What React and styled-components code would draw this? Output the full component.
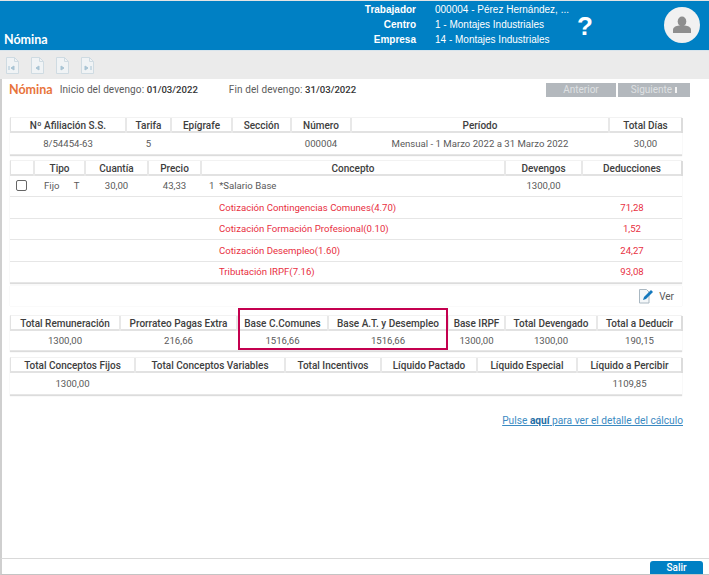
import React from 'react'
import styled, { createGlobalStyle } from 'styled-components'

const FONT = 'Roboto, "Noto Sans", sans-serif'
const BLUE = '#0080c4'

const GlobalStyle = createGlobalStyle`
  html, body { margin: 0; padding: 0; background: #fff; }
  body { font-family: ${FONT}; }
`

const Page = styled.div`
  width: 709px;
  height: 575px;
  box-sizing: border-box;
  border-top: 1px solid #e4e4e4;
  display: flex;
  flex-direction: column;
  overflow: hidden;
`

const Header = styled.header`
  height: 49px;
  flex: none;
  background: ${BLUE};
  display: flex;
  align-items: stretch;
  color: #fff;
`

const AppTitle = styled.div`
  font-family: Lato, sans-serif;
  font-size: 12.5px;
  font-weight: 700;
  align-self: flex-end;
  margin-left: 4px;
  line-height: 20px;
  width: 341px;
`

const InfoGrid = styled.div`
  display: grid;
  grid-template-columns: 71px 130px;
  column-gap: 19px;
  grid-auto-rows: 15px;
  align-content: start;
  padding-top: 1px;
  font-family: "Liberation Sans", Arial, sans-serif;
  font-size: 10px;
  line-height: 15px;
`

const InfoLabel = styled.div`
  font-weight: 700;
  text-align: right;
`

const InfoValue = styled.div`
  white-space: nowrap;
`

const Help = styled.div`
  font-family: "Liberation Sans", Arial, sans-serif;
  font-size: 26px;
  font-weight: 700;
  width: 30px;
  margin-left: 5px;
  text-align: center;
  line-height: 50px;
`

const Avatar = styled.div`
  width: 36px;
  height: 36px;
  border-radius: 50%;
  background: #f1f1f1;
  margin: 6px 0 0 64px;
  display: flex;
  align-items: center;
  justify-content: center;
`

const Toolbar = styled.div`
  height: 29px;
  flex: none;
  background: #ebebeb;
  display: flex;
  align-items: center;
  gap: 12px;
  padding-left: 6px;
  border-top: 1px solid #d8e4ec;
  box-sizing: border-box;
`

const Content = styled.main`
  flex: 1;
  border-left: 2px solid #cfcfcf;
  padding: 0 27px 0 8px;
  min-height: 0;
  position: relative;
`

const TitleRow = styled.div`
  height: 20px;
  padding-bottom: 1px;
  display: flex;
  align-items: center;
  font-size: 10px;
  color: #5c5c5c;
  margin-right: -8px;
`

const SectionTitle = styled.span`
  font-family: Lato, sans-serif;
  font-size: 12.5px;
  font-weight: 700;
  color: #e8743b;
  margin-right: 7px;
  margin-left: -1px;
`

const DateLabel = styled.span`
  margin-right: 31px;
  white-space: nowrap;
  letter-spacing: 0.1px;
  b { color: #333; font-weight: 500; font-size: 9.6px; letter-spacing: 0; }
`

const Pager = styled.div`
  margin-left: auto;
  display: flex;
  gap: 2px;
  padding-top: 1px;
`

const PagerButton = styled.div`
  width: ${p => p.$w}px;
  height: 14px;
  background: #b3b8bd;
  color: #dfe1e3;
  font-size: 10px;
  line-height: 14px;
  text-align: center;
  i {
    display: inline-block;
    width: 2px;
    height: 6px;
    background: #f3f3f3;
    margin-left: 3px;
  }
`

const Card = styled.section`
  margin-top: ${p => p.$top}px;
  box-shadow: 0 1px 1px #dcdcdc;
  background: #fff;
`

const Row = styled.div`
  display: grid;
  grid-template-columns: ${p => p.$cols};
  height: ${p => p.$h || 21.5}px;
  align-items: center;
  border-bottom: 1px solid #e6e6e6;
  box-sizing: border-box;
  font-size: 9.6px;
  color: ${p => (p.$red ? '#e8303f' : '#5a5a5a')};
`

const HeaderRow = styled(Row)`
  background: #fff;
  border-bottom: 2px solid #e2e2e2;
  border-left: 1px solid #e2e2e2;
  border-top: 1px solid #f2f2f2;
  color: #3e3e3e;
  font-size: 10px;
  font-weight: 500;
  height: 16px;
  align-items: stretch;
`

const HeadCell = styled.div`
  text-align: center;
  line-height: 15px;
  white-space: nowrap;
  border-right: 2px solid #e8e8e8;
  &:last-child { border-right: 2px solid #dcdcdc; }
`

const Cell = styled.div`
  text-align: ${p => p.$align || 'center'};
  padding-left: ${p => p.$pad || 0}px;
  white-space: nowrap;
`

const CheckBox = styled.div`
  width: 9px;
  height: 9px;
  border: 1px solid #666;
  border-radius: 2px;
  margin-left: 6px;
`

const VerRow = styled.div`
  height: 20px;
  display: flex;
  justify-content: flex-end;
  align-items: center;
  gap: 5px;
  padding-right: 8px;
  font-size: 10px;
  color: #5a5a5a;
  margin-top: 3px;
  box-shadow: 0 0 1px #e0e0e0;
`

const Highlight = styled.div`
  position: absolute;
  left: 236px;
  top: 229px;
  width: 206px;
  height: 38px;
  border: 2px solid #c4004f;
  pointer-events: none;
`

const DetailLink = styled.div`
  margin-top: 20px;
  margin-right: -1px;
  text-align: right;
  font-size: 10.2px;
  color: #3b8ac2;
  text-decoration: underline;
  b { color: #1f6ea6; font-weight: 700; }
`

const Footer = styled.footer`
  height: 17px;
  flex: none;
  border-top: 1px solid #d9d9d9;
  border-left: 2px solid #cfcfcf;
  border-bottom: 1px solid #c4c4c4;
  box-sizing: border-box;
  display: flex;
  justify-content: flex-end;
  align-items: flex-end;
  padding-right: 6px;
`

const ExitButton = styled.div`
  width: 53px;
  height: 13px;
  background: ${BLUE};
  border-radius: 3px 3px 0 0;
  color: #fff;
  font-size: 10px;
  font-weight: 500;
  line-height: 14px;
  text-align: center;
`

const PageIcon = ({ kind }) => (
  <svg width="13" height="17" viewBox="0 0 13 17">
    <path d="M.5.5h8l4 4v12H.5z" fill="#f0f3f5" stroke="#cfdbe2" />
    <path d="M8.500.5v4h4" fill="none" stroke="#cfdbe2" />
    {kind === 'first' && <path d="M3 9v4M8 9l-3 2 3 2z" fill="#a9c4d4" stroke="#a9c4d4" />}
    {kind === 'prev' && <path d="M8 9l-3 2 3 2z" fill="#a9c4d4" stroke="#a9c4d4" />}
    {kind === 'next' && <path d="M5 9l3 2-3 2z" fill="#a9c4d4" stroke="#a9c4d4" />}
    {kind === 'last' && <path d="M10 9v4M4 9l3 2-3 2z" fill="#a9c4d4" stroke="#a9c4d4" />}
  </svg>
)

const EditIcon = () => (
  <svg width="16" height="16" viewBox="0 0 16 16">
    <path d="M1.500 1.500h7l2.500 2.500v11h-9.500z" fill="#f4f7f9" stroke="#aab8c2" />
    <path d="M5 12l1-3 7-7 2 2-7 7z" fill="#1478bd" />
  </svg>
)

const UserIcon = () => (
  <svg width="20" height="20" viewBox="0 0 20 20">
    <ellipse cx="10" cy="6.500" rx="4.300" ry="5" fill="#8e8e8e" />
    <path d="M1 18v-3c0-3 3-4 6-4.500h6c3 .5 6 1.500 6 4.500v3z" fill="#8e8e8e" />
  </svg>
)

const AFILIACION = '116px 45px 61px 59px 60px 258px 73px'
const CONCEPTOS = '24px 51px 63px 53px 304px 77px 100px'
const TOTALES = '110px 117px 91px 120px 57px 92px 85px'
const LIQUIDOS = '125px 150px 96px 96px 100px 105px'

const deducciones = [
  ['Cotización Contingencias Comunes(4.70)', '71,28'],
  ['Cotización Formación Profesional(0.10)', '1,52'],
  ['Cotización Desempleo(1.60)', '24,27'],
  ['Tributación IRPF(7.16)', '93,08']
]

const heads = list => list.map((h, i) => <HeadCell key={i}>{h}</HeadCell>)
const cells = list => list.map((c, i) => <Cell key={i}>{c}</Cell>)

export default function App () {
  return (
    <Page>
      <GlobalStyle />
      <Header>
        <AppTitle>Nómina</AppTitle>
        <InfoGrid>
          <InfoLabel>Trabajador</InfoLabel><InfoValue>000004 - Pérez Hernández, ...</InfoValue>
          <InfoLabel>Centro</InfoLabel><InfoValue>1 - Montajes Industriales</InfoValue>
          <InfoLabel>Empresa</InfoLabel><InfoValue>14 - Montajes Industriales</InfoValue>
        </InfoGrid>
        <Help>?</Help>
        <Avatar><UserIcon /></Avatar>
      </Header>
      <Toolbar>
        <PageIcon kind="first" />
        <PageIcon kind="prev" />
        <PageIcon kind="next" />
        <PageIcon kind="last" />
      </Toolbar>
      <Content>
        <TitleRow>
          <SectionTitle>Nómina</SectionTitle>
          <DateLabel>Inicio del devengo: <b>01/03/2022</b></DateLabel>
          <DateLabel>Fin del devengo: <b>31/03/2022</b></DateLabel>
          <Pager>
            <PagerButton $w={70}>Anterior</PagerButton>
            <PagerButton $w={72}>Siguiente<i /></PagerButton>
          </Pager>
        </TitleRow>
        <Card $top={17}>
          <HeaderRow $cols={AFILIACION}>
            {heads(['Nº Afiliación S.S.', 'Tarifa', 'Epígrafe', 'Sección', 'Número', 'Período', 'Total Días'])}
          </HeaderRow>
          <Row $cols={AFILIACION}>
            {cells(['8/54454-63', '5', '', '', '000004', 'Mensual - 1 Marzo 2022 a 31 Marzo 2022', '30,00'])}
          </Row>
        </Card>
        <Card $top={5}>
          <HeaderRow $cols={CONCEPTOS}>
            {heads(['', 'Tipo', 'Cuantía', 'Precio', 'Concepto', 'Devengos', 'Deducciones'])}
          </HeaderRow>
          <Row $cols={CONCEPTOS}>
            <CheckBox />
            <Cell $align="left" $pad={10}>Fijo &nbsp; &nbsp; &nbsp;T</Cell>
            <Cell>30,00</Cell>
            <Cell>43,33</Cell>
            <Cell $align="left" $pad={8}>1 &nbsp;*Salario Base</Cell>
            <Cell>1300,00</Cell>
            <Cell />
          </Row>
          {deducciones.map(([name, value]) => (
            <Row $cols={CONCEPTOS} $red key={name}>
              <Cell /><Cell /><Cell /><Cell />
              <Cell $align="left" $pad={18}>{name}</Cell>
              <Cell />
              <Cell>{value}</Cell>
            </Row>
          ))}
        </Card>
        <VerRow><EditIcon />Ver</VerRow>
        <Card $top={9}>
          <HeaderRow $cols={TOTALES}>
            {heads(['Total Remuneración', 'Prorrateo Pagas Extra', 'Base C.Comunes', 'Base A.T. y Desempleo', 'Base IRPF', 'Total Devengado', 'Total a Deducir'])}
          </HeaderRow>
          <Row $cols={TOTALES} $h={20}>
            {cells(['1300,00', '216,66', '1516,66', '1516,66', '1300,00', '1300,00', '190,15'])}
          </Row>
        </Card>
        <Card $top={6}>
          <HeaderRow $cols={LIQUIDOS}>
            {heads(['Total Conceptos Fijos', 'Total Conceptos Variables', 'Total Incentivos', 'Líquido Pactado', 'Líquido Especial', 'Líquido a Percibir'])}
          </HeaderRow>
          <Row $cols={LIQUIDOS}>
            {cells(['1300,00', '', '', '', '', '1109,85'])}
          </Row>
        </Card>
        <Highlight />
        <DetailLink>Pulse <b>aquí</b> para ver el detalle del cálculo</DetailLink>
      </Content>
      <Footer><ExitButton>Salir</ExitButton></Footer>
    </Page>
  )
}
